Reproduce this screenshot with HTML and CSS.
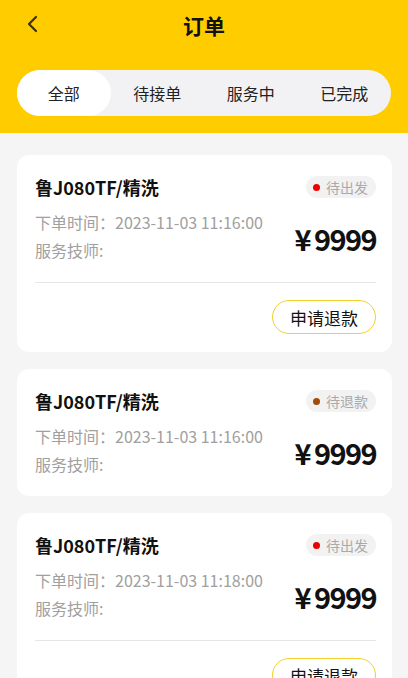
FILE: index.html
```html
<!DOCTYPE html>
<html>
  <head>
    <title>订单</title>
    <meta charset="utf-8" />
    <meta name="viewport" content="width=device-width, initial-scale=1" />
    <link rel="stylesheet" href="styles.css">
  </head>
  <body>
    <div class="header">
      <div class="nav">
        <span class="back">
          <svg width="14" height="18" viewBox="0 0 14 18">
            <path d="M11 2 L4 9 L11 16" fill="none" stroke="#3a3000" stroke-width="2.2" stroke-linecap="round" stroke-linejoin="round" />
          </svg>
        </span>
        <h1>订单</h1>
      </div>
      <div class="tabs">
        <div class="tab active">全部</div>
        <div class="tab">待接单</div>
        <div class="tab">服务中</div>
        <div class="tab">已完成</div>
      </div>
    </div>

    <div class="list">
      <div class="card">
        <div class="row">
          <div class="name">鲁J080TF/精洗</div>
          <div class="status"><i class="dot red"></i>待出发</div>
        </div>
        <div class="row info">
          <div class="meta">
            <p>下单时间：2023-11-03 11:16:00</p>
            <p>服务技师:</p>
          </div>
          <div class="price"><span class="yen">¥</span>9999</div>
        </div>
        <div class="foot">
          <button class="btn">申请退款</button>
        </div>
      </div>

      <div class="card">
        <div class="row">
          <div class="name">鲁J080TF/精洗</div>
          <div class="status"><i class="dot brown"></i>待退款</div>
        </div>
        <div class="row info">
          <div class="meta">
            <p>下单时间：2023-11-03 11:16:00</p>
            <p>服务技师:</p>
          </div>
          <div class="price"><span class="yen">¥</span>9999</div>
        </div>
      </div>

      <div class="card">
        <div class="row">
          <div class="name">鲁J080TF/精洗</div>
          <div class="status"><i class="dot red"></i>待出发</div>
        </div>
        <div class="row info">
          <div class="meta">
            <p>下单时间：2023-11-03 11:18:00</p>
            <p>服务技师:</p>
          </div>
          <div class="price"><span class="yen">¥</span>9999</div>
        </div>
        <div class="foot">
          <button class="btn">申请退款</button>
        </div>
      </div>
    </div>
  </body>
</html>
```

FILE: styles.css
```css
* {
  box-sizing: border-box;
}
html,
body {
  margin: 0;
  font-family: "Noto Sans CJK SC", "Noto Sans", sans-serif;
  color: #111;
  background: #f5f5f5;
}

.header {
  background: #ffcc00;
  height: 133px;
  padding: 0 17px;
}

.nav {
  height: 50px;
  position: relative;
  display: flex;
  align-items: center;
  justify-content: center;
}
.back {
  position: absolute;
  left: 8px;
  top: 14px;
}
h1 {
  margin: 0;
  font-size: 21px;
  line-height: 28px;
  font-weight: 700;
  color: #111;
}

.tabs {
  margin-top: 20px;
  height: 46px;
  background: #f2f2f4;
  border-radius: 23px;
  display: grid;
  grid-template-columns: repeat(4, 1fr);
}
.tab {
  display: flex;
  align-items: center;
  justify-content: center;
  font-size: 16px;
  color: #222;
  border-radius: 23px;
}
.tab.active {
  background: white;
}

.list {
  padding: 22px 16px 0 17px;
  display: flex;
  flex-direction: column;
  gap: 17px;
}

.card {
  background: white;
  border-radius: 12px;
  padding: 18px 16px 18px 18px;
}
.row {
  display: flex;
  justify-content: space-between;
  align-items: center;
}
.name {
  font-size: 18px;
  line-height: 28px;
  font-weight: 700;
}
.status {
  background: #f2f2f2;
  border-radius: 11px;
  height: 22px;
  padding: 0 8px 0 7px;
  display: flex;
  align-items: center;
  font-size: 14px;
  color: #aaa;
}
.dot {
  width: 7px;
  height: 7px;
  border-radius: 50%;
  margin-right: 6px;
}
.dot.red {
  background: #ee0000;
}
.dot.brown {
  background: #a44a0a;
}

.info {
  margin-top: 7px;
}
.meta p {
  margin: 0;
  font-size: 16px;
  line-height: 28px;
  color: #a0a0a0;
}
.price {
  font-size: 29px;
  line-height: 36px;
  font-weight: 700;
  margin-top: 4px;
  letter-spacing: -1.6px;
}
.yen {
  margin-right: 4px;
}

.foot {
  margin-top: 18px;
  border-top: 1px solid #e6e6e6;
  padding-top: 17px;
  display: flex;
  justify-content: flex-end;
}
.btn {
  font-family: inherit;
  font-size: 17px;
  color: #111;
  background: white;
  border: 1px solid #f5d02a;
  border-radius: 17px;
  height: 34px;
  width: 104px;
  padding: 0;
}
```
